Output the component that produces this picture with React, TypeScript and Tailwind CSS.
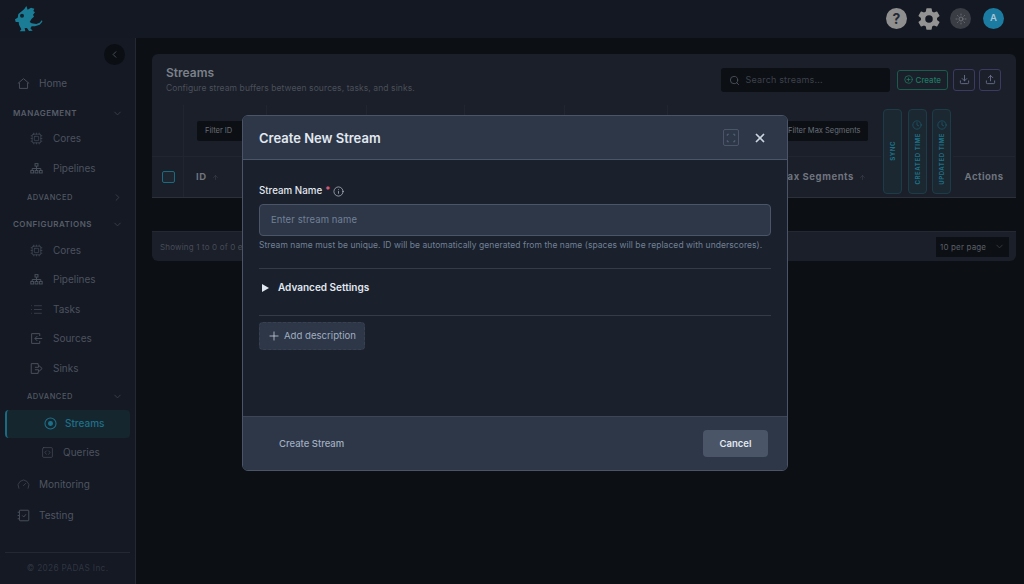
import {
  ArrowUp,
  ChevronDown,
  ChevronLeft,
  ChevronRight,
  CirclePlus,
  Clock,
  Cpu,
  Download,
  Gauge,
  Info,
  List,
  Plus,
  Search,
  SquareCode,
  Sun,
  Upload,
  X,
} from "lucide-react";
import { IoSettingsSharp } from "react-icons/io5";

type IconProps = { size?: number; strokeWidth?: number; className?: string };

const Logo = () => (
  <svg viewBox="48 18 84 78" className="w-[28px] h-[26px]" fill="#1b7d95">
    <path d="M70 32 L76 27 L82 18 L86 29 L96 23 L106 26 L103 33 L108 37 L102 44 L105 50 L98 56 L92 66 L98 70 L112 72 L122 68 L129 60 L130 65 L122 74 L108 79 L98 79 L94 85 L101 92 L90 93 L84 84 L77 84 L79 94 L62 94 L67 88 L60 74 L59 66 L50 66 L48 58 L56 53 L58 42 Z" />
    <circle cx="69" cy="47" r="6" fill="#10222d" />
  </svg>
);

const HomeIcon = ({ size = 13, strokeWidth = 1.2, className }: IconProps) => (
  <svg viewBox="0 0 16 16" width={size} height={size} fill="none" stroke="currentColor" strokeWidth={strokeWidth} className={className}>
    <path d="M1 8 L8 2 L15 8 M3 7 V14 H13 V7" />
  </svg>
);

const PipelineIcon = ({ size = 13, strokeWidth = 1.1, className }: IconProps) => (
  <svg viewBox="0 0 16 16" width={size} height={size} fill="none" stroke="currentColor" strokeWidth={strokeWidth} className={className}>
    <rect x="6.2" y="2" width="3.6" height="3" />
    <rect x="1" y="10.5" width="3.4" height="3" />
    <rect x="6.3" y="10.5" width="3.4" height="3" />
    <rect x="11.6" y="10.5" width="3.4" height="3" />
    <path d="M8 5 V10.5 M2.7 10.5 V8 H13.3 V10.5" />
  </svg>
);

const SourceIcon = ({ size = 13, strokeWidth = 1.2, className }: IconProps) => (
  <svg viewBox="0 0 16 16" width={size} height={size} fill="none" stroke="currentColor" strokeWidth={strokeWidth} className={className}>
    <path d="M12 5 V2 H2 V14 H12 V11 M15 8 H6 M9 5 L6 8 L9 11" />
  </svg>
);

const SinkIcon = ({ size = 13, strokeWidth = 1.2, className }: IconProps) => (
  <svg viewBox="0 0 16 16" width={size} height={size} fill="none" stroke="currentColor" strokeWidth={strokeWidth} className={className}>
    <path d="M10 4 V2 H1.5 V14 H10 V12 M6 6.5 H10.5 V4 L15 8 L10.5 12 V9.5 H6" />
  </svg>
);

const StreamIcon = ({ size = 13, strokeWidth = 1.3, className }: IconProps) => (
  <svg viewBox="0 0 16 16" width={size} height={size} fill="none" stroke="currentColor" strokeWidth={strokeWidth} className={className}>
    <circle cx="8" cy="8" r="6.8" />
    <circle cx="8" cy="8" r="2.4" fill="currentColor" />
  </svg>
);

const TestIcon = ({ size = 13, strokeWidth = 1.1, className }: IconProps) => (
  <svg viewBox="0 0 16 16" width={size} height={size} fill="none" stroke="currentColor" strokeWidth={strokeWidth} className={className}>
    <rect x="3" y="1.5" width="11.5" height="13" rx="0.8" />
    <path d="M0.8 4 H2.5 M0.8 8 H2.5 M0.8 12 H2.5 M6.5 8 L8.3 9.8 L11 6.5" />
  </svg>
);

const Section = ({ label, open = true, sub = false, className = "" }: { label: string; open?: boolean; sub?: boolean; className?: string }) => (
  <div className={`flex items-center justify-between h-[20px] pr-[12px] ${sub ? "pl-[27px] text-[7.5px] font-medium tracking-[0.07em] text-[#525862]" : "pl-[13px] text-[8px] font-semibold tracking-[0.06em] text-[#575d68]"} ${className}`}>
    <span>{label}</span>
    {open ? <ChevronDown size={11} className="text-[#3a404b]" /> : <ChevronRight size={11} className="text-[#3a404b]" />}
  </div>
);

const SubItem = ({ icon: Icon, label }: { icon: React.ComponentType<IconProps>; label: string }) => (
  <div className="flex items-center h-[29.4px] pl-[30px] gap-[10px] text-[10px] text-[#4c525e]">
    <Icon size={13} strokeWidth={1.2} className="text-[#4a505c]" />
    <span>{label}</span>
  </div>
);

const TopItem = ({ icon: Icon, label, className = "" }: { icon: React.ComponentType<IconProps>; label: string; className?: string }) => (
  <div className={`flex items-center h-[31px] pl-[17px] gap-[9px] text-[10px] text-[#4f5561] ${className}`}>
    <Icon size={13} strokeWidth={1.2} className="text-[#4a505c]" />
    <span>{label}</span>
  </div>
);

const Sidebar = () => (
  <aside className="relative flex flex-col w-[136px] shrink-0 bg-[#141924] border-r border-[#232833]">
    <button className="absolute right-[10px] top-[6px] flex items-center justify-center w-[21px] h-[21px] rounded-full bg-[#0b0e13]">
      <ChevronLeft size={11} className="text-[#4a505c]" />
    </button>
    <div className="flex flex-col pt-[29.5px] flex-1">
      <TopItem icon={HomeIcon} label="Home" />
      <Section label="MANAGEMENT" className="mt-[4.5px] mb-[1px]" />
      <SubItem icon={Cpu} label="Cores" />
      <SubItem icon={PipelineIcon} label="Pipelines" />
      <Section label="ADVANCED" open={false} sub className="mt-[4.5px]" />
      <Section label="CONFIGURATIONS" className="mt-[7px] mb-[1.5px]" />
      <SubItem icon={Cpu} label="Cores" />
      <SubItem icon={PipelineIcon} label="Pipelines" />
      <SubItem icon={List} label="Tasks" />
      <SubItem icon={SourceIcon} label="Sources" />
      <SubItem icon={SinkIcon} label="Sinks" />
      <Section label="ADVANCED" sub className="mt-[4px]" />
      <div className="flex items-center h-[28px] mt-[3px] mx-[5px] pl-[37px] gap-[8px] rounded-[4px] border-l-2 border-[#1b6a80] bg-[#16262f] text-[10px] font-medium text-[#1c7089]">
        <StreamIcon size={13} />
        <span>Streams</span>
      </div>
      <div className="flex items-center h-[30px] pl-[41px] gap-[9px] text-[10px] text-[#4c525e]">
        <SquareCode size={13} strokeWidth={1.2} />
        <span>Queries</span>
      </div>
      <TopItem icon={Gauge} label="Monitoring" className="mt-[1.5px]" />
      <TopItem icon={TestIcon} label="Testing" />
    </div>
    <div className="flex items-center justify-center h-[32px] mx-[5px] border-t border-[#232833] text-[8.25px] tracking-[0.04em] text-[#2f3540]">
      © 2026 PADAS Inc.
    </div>
  </aside>
);

const columns = ["", "", "", "", "", "", ""];

const Table = () => (
  <div className="grid grid-cols-[32px_83px_100px_98px_100px_103px_100px_113px_72px_62px] grid-rows-[52px_40px] bg-[#1a1f29] border-b border-[#2b303a]">
    {/* filter row */}
    <div className="border-r border-b border-[#20252f]" />
    <div className="flex items-center pl-[13px] border-r border-b border-[#20252f]">
      <div className="flex items-center w-[60px] h-[20px] pl-[8px] bg-[#0c0f14] rounded-[2px] text-[7.5px] text-[#6a6f79]">Filter ID</div>
    </div>
    {columns.slice(0, 4).map((_, i) => (
      <div key={i} className="border-r border-b border-[#20252f]" />
    ))}
    <div className="border-b border-[#20252f]" />
    <div className="flex items-center pl-[13px] border-b border-[#20252f]">
      <div className="flex items-center w-[87px] h-[20px] pl-[7px] bg-[#0c0f14] rounded-[2px] text-[7.5px] whitespace-nowrap text-[#6a6f79]">Filter Max Segments</div>
    </div>
    <div className="row-span-2 flex items-center pl-[2px] gap-[5.5px] h-[92px]">
      {["SYNC", "CREATED TIME", "UPDATED TIME"].map((label) => (
        <div key={label} className={`flex flex-col items-center w-[19px] h-[85px] gap-[3px] rounded-[4px] border border-[#1c3d48] bg-[#1b2731] text-[6px] font-bold tracking-[0.1em] text-[#1d7288] ${label === "SYNC" ? "justify-center" : "justify-start pt-[10px]"}`}>
          {label !== "SYNC" && <Clock size={10} strokeWidth={1.2} className="shrink-0" />}
          <span className="[writing-mode:vertical-rl] rotate-180 whitespace-nowrap">{label}</span>
        </div>
      ))}
    </div>
    <div className="border-b border-[#20252f]" />
    {/* header row */}
    <div className="flex items-center justify-center pl-[1px] border-r border-[#20252f]">
      <div className="w-[13px] h-[12px] rounded-[2px] border border-[#1b6a80] bg-[#1d2530]" />
    </div>
    <div className="flex items-center pl-[12px] pt-[1px] gap-[5px] border-r border-[#20252f] text-[9.5px] font-bold tracking-[0.06em] text-[#6f747e]">
      ID <ArrowUp size={7} className="text-[#3d424d]" />
    </div>
    {columns.slice(0, 5).map((_, i) => (
      <div key={i} className="border-r border-[#20252f]" />
    ))}
    <div className="flex items-center justify-end pr-[15px] pt-[1px] gap-[5px] text-[9.5px] font-bold tracking-[0.06em] whitespace-nowrap text-[#6f747e]">
      Max Segments <ArrowUp size={7} className="text-[#3d424d]" />
    </div>
    <div className="flex items-center justify-center pt-[1px] text-[9.5px] font-bold tracking-[0.05em] text-[#6f747e]">Actions</div>
  </div>
);

const Main = () => (
  <main className="flex-1 bg-[#0c0f14] pl-[16px] pr-[8px] pt-[16px]">
    <div className="rounded-t-[6px] overflow-hidden">
      <div className="flex items-center justify-between h-[51px] pl-[14px] pr-[15px] bg-[#1a1f29]">
        <div>
          <h1 className="text-[12px] font-semibold leading-[16px] text-[#7b808a]">Streams</h1>
          <p className="text-[8.5px] leading-[14px] tracking-[0.01em] text-[#4a4f5a]">Configure stream buffers between sources, tasks, and sinks.</p>
        </div>
        <div className="flex items-center">
          <div className="flex items-center w-[169px] h-[24px] mt-[1px] pl-[8px] gap-[6px] rounded-[3px] bg-[#0c0f14] text-[9px] tracking-[0.02em] text-[#3d424c]">
            <Search size={11} className="text-[#4d525c]" />
            <span>Search streams...</span>
          </div>
          <button className="flex items-center h-[20px] ml-[7px] px-[6px] gap-[3px] rounded-[3px] border border-[#1c5a4d] text-[8px] font-medium text-[#1f7a63]">
            <CirclePlus size={9} />
            Create
          </button>
          <button className="flex items-center justify-center w-[22px] h-[22px] ml-[5px] rounded-[3px] border border-[#3b3a63] text-[#6a6f8c]">
            <Download size={11} />
          </button>
          <button className="flex items-center justify-center w-[22px] h-[22px] ml-[4px] rounded-[3px] border border-[#3b3a63] text-[#6a6f8c]">
            <Upload size={11} />
          </button>
        </div>
      </div>
      <Table />
    </div>
    <div className="flex items-center justify-between h-[30px] mt-[33px] pl-[8px] pr-[7px] rounded-b-[6px] bg-[#1a1f29] border-t border-[#232833]">
      <span className="text-[8px] tracking-[0.02em] text-[#474c57]">Showing 1 to 0 of 0 entries</span>
      <div className="flex items-center justify-between w-[73px] h-[20px] pl-[4px] pr-[4px] bg-[#0c0f14] text-[8px] tracking-[0.02em] text-[#5a5f69]">
        10 per page
        <ChevronDown size={11} className="text-[#353a44]" />
      </div>
    </div>
  </main>
);

const Modal = () => (
  <div className="absolute inset-0">
    <div className="absolute left-[242px] top-[115px] flex flex-col w-[546px] h-[356px] overflow-hidden rounded-[6px] border border-[#4a5568] bg-[#1a202c]">
      <div className="flex items-center justify-between h-[44px] shrink-0 pl-[16px] pr-[20px] bg-[#2d3748] border-b border-[#4a5568]">
        <h2 className="pt-[2px] text-[13px] font-semibold text-[#e2e8f0]">Create New Stream</h2>
        <div className="flex items-center gap-[14px]">
          <div className="flex items-center justify-center w-[16px] h-[17px] rounded-[2px] border border-[#4a5568]">
            <svg viewBox="0 0 12 12" className="w-[10px] h-[10px]" fill="none" stroke="#5f6e84" strokeWidth="0.9">
              <path d="M1.5 3.5 V1.5 H3.5 M8.5 1.5 H10.5 V3.5 M10.5 8.5 V10.5 H8.5 M3.5 10.5 H1.5 V8.5" />
            </svg>
          </div>
          <X size={14} strokeWidth={3} className="text-[#cbd5e0]" />
        </div>
      </div>
      <div className="flex-1 px-[16px] pt-[24px]">
        <div className="flex items-center gap-[3px] h-[14px] text-[9.75px] font-medium text-[#e2e8f0]">
          Stream Name <span className="text-[#f56587]">*</span>
          <Info size={11} strokeWidth={1.4} className="text-[#cbd5e0]" />
        </div>
        <div className="flex items-center h-[32px] mt-[6px] pl-[11px] rounded-[4px] border border-[#4a5568] bg-[#2d3748] text-[9.5px] tracking-[0.01em] text-[#718096]">
          Enter stream name
        </div>
        <p className="mt-[3px] text-[8.5px] leading-[12px] tracking-[0.007em] whitespace-nowrap text-[#718096]">
          Stream name must be unique. ID will be automatically generated from the name (spaces will be replaced with underscores).
        </p>
        <div className="flex items-center h-[48px] mt-[17px] pb-[9px] gap-[9px] border-t border-b border-[#343b49] text-[10px] font-semibold text-[#e2e8f0]">
          <span className="ml-[3px] w-0 h-0 border-y-[4px] border-y-transparent border-l-[7px] border-l-[#e2e8f0]" />
          Advanced Settings
        </div>
        <button className="flex items-center w-[106px] h-[28px] mt-[6px] pl-[7px] gap-[3px] rounded-[4px] border border-dashed border-[#38414f] bg-[#2d3748] text-[9.6px] whitespace-nowrap text-[#a0aec0]">
          <Plus size={14} strokeWidth={1.3} className="text-[#cbd5e0]" />
          Add description
        </button>
      </div>
      <div className="flex items-center justify-between h-[54px] shrink-0 pl-[36px] pr-[19px] bg-[#2d3748] border-t border-[#3d4656]">
        <span className="pt-[1px] text-[9.5px] font-medium text-[#a0aec0]">Create Stream</span>
        <button className="w-[65px] h-[27px] pt-[1px] rounded-[4px] bg-[#4a5568] text-[9.5px] font-semibold text-[#e2e8f0]">Cancel</button>
      </div>
    </div>
  </div>
);

export default function App() {
  return (
    <div className="relative flex flex-col w-full h-[584px] overflow-hidden bg-[#0c0f14] [font-family:Inter,sans-serif]">
      <header className="flex items-center justify-between h-[38px] shrink-0 pl-[15px] pr-[20px] pb-[1px] bg-[#131822]">
        <Logo />
        <div className="flex items-center">
          <div className="flex items-center justify-center w-[21px] h-[21px] rounded-full bg-[#8f8f8f] text-[14px] font-bold text-[#232832]">?</div>
          <IoSettingsSharp size={24} className="ml-[10px] text-[#939393]" />
          <div className="flex items-center justify-center w-[21px] h-[21px] ml-[9px] rounded-full bg-[#3a3d44]">
            <Sun size={12} strokeWidth={1.2} className="text-[#8a8d92]" />
          </div>
          <div className="flex items-center justify-center w-[21px] h-[21px] ml-[12px] rounded-full bg-[#1c7ba0] text-[9.5px] font-semibold text-[#a9c6d6]">A</div>
        </div>
      </header>
      <div className="flex flex-1 min-h-0">
        <Sidebar />
        <Main />
      </div>
      <Modal />
    </div>
  );
}
